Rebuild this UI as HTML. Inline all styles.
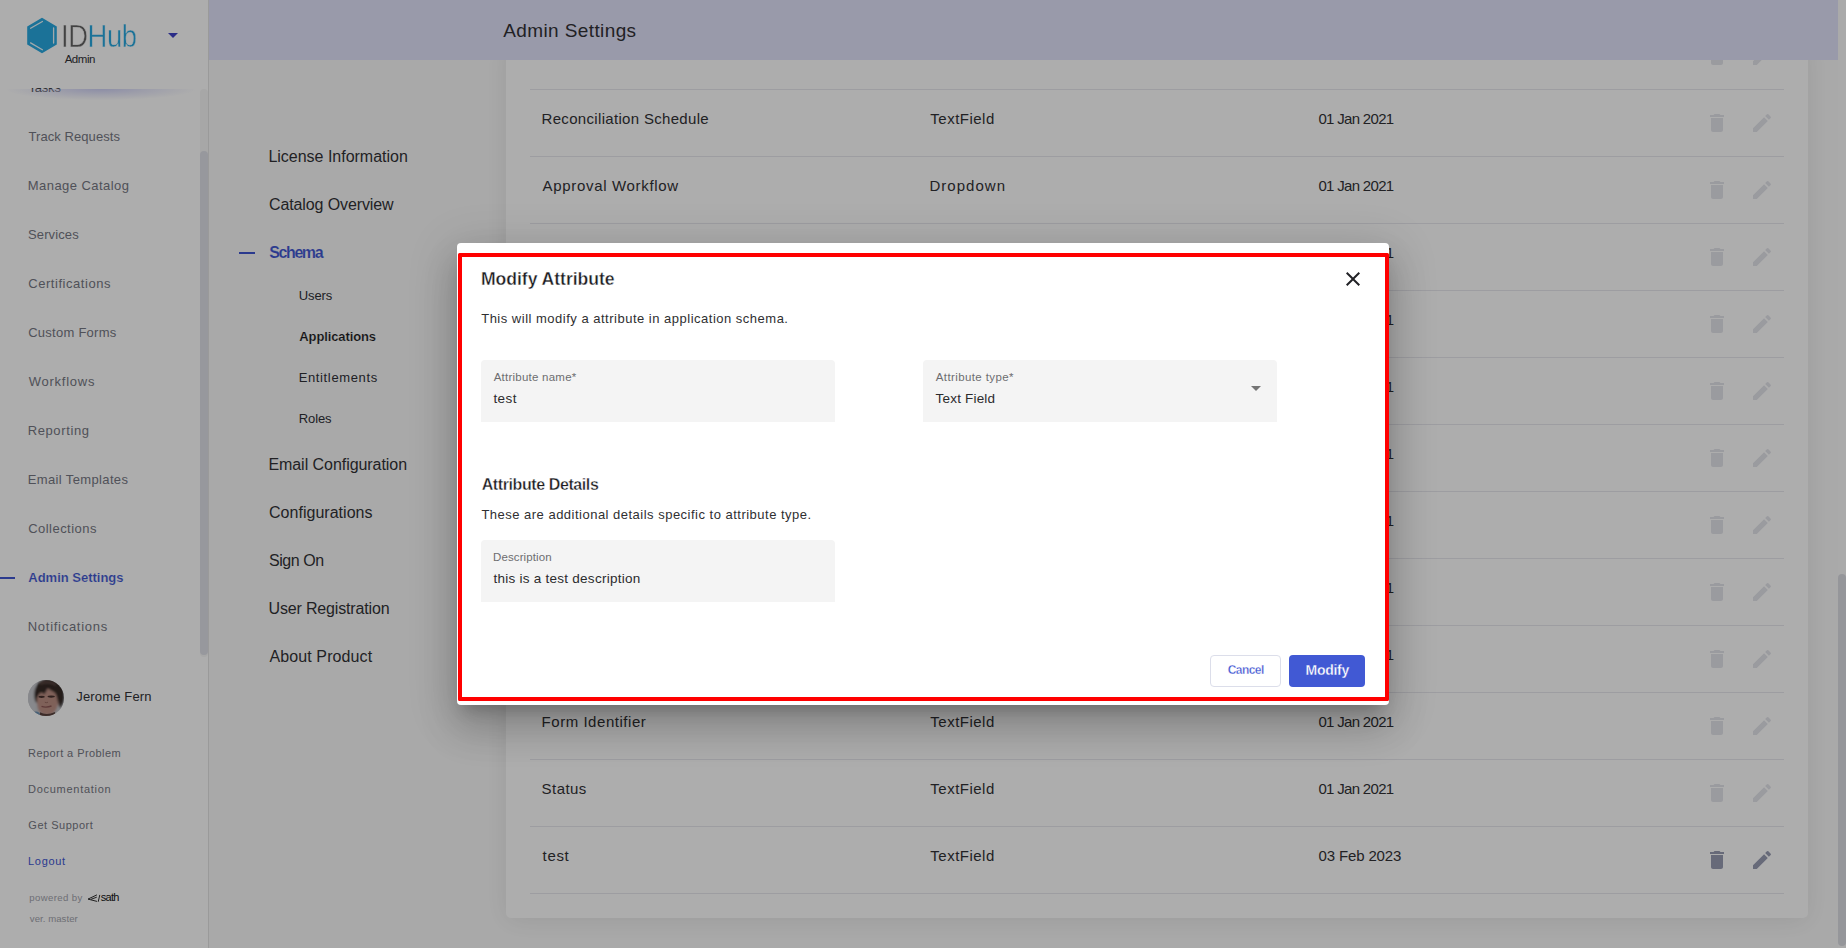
<!DOCTYPE html>
<html lang="en">
<head>
<meta charset="utf-8">
<title>IDHub - Admin Settings</title>
<style>
*{box-sizing:border-box;margin:0;padding:0}
html,body{width:1846px;height:948px;overflow:hidden}
body{font-family:"Liberation Sans",sans-serif;background:#fafafa;color:#26262e;position:relative}
.abs{position:absolute}
.t{position:absolute;white-space:pre;line-height:1}
#sidebar{position:absolute;left:0;top:0;width:209px;height:948px;background:#fff;border-right:1px solid #e4e4e4}
#sidescroll{position:absolute;left:0;top:0;width:208px;height:660px;overflow:hidden}
#sidehead{position:absolute;left:0;top:0;width:208px;height:88px;background:#fff;z-index:2}
#sideshadow{position:absolute;left:6px;top:89px;width:190px;height:11px;z-index:1;background:radial-gradient(ellipse 50% 100% at 50% 0,rgba(205,207,245,.95),rgba(205,207,245,.5) 45%,rgba(205,207,245,0) 100%)}
.logo{letter-spacing:-.5px;transform:scaleX(.857);transform-origin:0 0;-webkit-text-stroke:.5px #fff}
#strack{position:absolute;left:200px;top:89px;width:8px;height:568px;background:#f6f6f6;border-radius:4px;z-index:3}
#sthumb{position:absolute;left:200px;top:151px;width:8px;height:504px;background:#dfe0e8;border-radius:4px;z-index:3}
#header{position:absolute;left:209px;top:0;width:1629px;height:60px;background:#e2e3fb;z-index:4}
#card{position:absolute;left:506px;top:40px;width:1302px;height:878px;background:#fff;border-radius:5px;box-shadow:0 3px 26px rgba(0,0,0,.085)}
.line{position:absolute;left:530px;width:1254px;height:1px;background:#e8e8ed}
.ic{position:absolute;width:24px;height:24px}
#rtrack{position:absolute;left:1838px;top:0;width:8px;height:948px;background:#fbfbfb}
#rthumb{position:absolute;left:1838px;top:574px;width:8px;height:372px;background:#dcdde4;border-radius:4px}
#overlay{position:absolute;left:0;top:0;width:1846px;height:948px;background:rgba(0,0,0,.32);z-index:10}
#modal{position:absolute;left:457px;top:243px;width:932px;height:462px;background:#fff;border-radius:4px;z-index:20;
 box-shadow:0 11px 15px -7px rgba(0,0,0,.2),0 24px 38px 3px rgba(0,0,0,.14),0 9px 46px 8px rgba(0,0,0,.12)}
#hl{position:absolute;left:458px;top:253px;width:931px;height:448px;border:4px solid #ff0000;border-radius:1.5px;z-index:40}
.field{position:absolute;width:354px;height:62px;background:#f4f4f4;border-radius:4px 4px 0 0;z-index:25}
#cancel{position:absolute;left:1210px;top:655px;width:71px;height:32px;border:1px solid #dcdeea;border-radius:4px;background:#fff;z-index:25}
#modify{position:absolute;left:1289px;top:655px;width:76px;height:32px;border-radius:4px;background:#4159d4;z-index:25}
</style>
</head>
<body>
<div id="sidebar">
<div id="sidescroll">
<div class="t" style="left:28.49px;top:81px;font-size:13px;letter-spacing:-0.20px;color:#3c3d45;">Tasks</div>
<div class="t" style="left:28.49px;top:130px;font-size:13px;letter-spacing:0.07px;color:#767883;">Track Requests</div>
<div class="t" style="left:27.76px;top:179px;font-size:13px;letter-spacing:0.45px;color:#767883;">Manage Catalog</div>
<div class="t" style="left:28.03px;top:228px;font-size:13px;letter-spacing:0.11px;color:#767883;">Services</div>
<div class="t" style="left:28.21px;top:277px;font-size:13px;letter-spacing:0.55px;color:#767883;">Certifications</div>
<div class="t" style="left:28.21px;top:326px;font-size:13px;letter-spacing:0.26px;color:#767883;">Custom Forms</div>
<div class="t" style="left:28.69px;top:375px;font-size:13px;letter-spacing:0.76px;color:#767883;">Workflows</div>
<div class="t" style="left:27.67px;top:424px;font-size:13px;letter-spacing:0.62px;color:#767883;">Reporting</div>
<div class="t" style="left:27.67px;top:473px;font-size:13px;letter-spacing:0.37px;color:#767883;">Email Templates</div>
<div class="t" style="left:28.21px;top:522px;font-size:13px;letter-spacing:0.46px;color:#767883;">Collections</div>
<div class="abs" style="left:0;top:577px;width:15px;height:2px;background:#4056d2"></div>
<div class="t" style="left:28.32px;top:571px;font-size:13px;font-weight:700;letter-spacing:-0.01px;color:#4056d2;-webkit-text-stroke:.15px #fff;">Admin Settings</div>
<div class="t" style="left:27.75px;top:620px;font-size:13px;letter-spacing:0.72px;color:#767883;">Notifications</div>
</div>
<div id="sidehead">
<svg class="abs" style="left:26px;top:17px" width="32" height="37" viewBox="0 0 32 37">
<polygon points="16,0.8 30.8,9.4 30.8,27.6 16,36.2 1.2,27.6 1.2,9.4" fill="#29a9e0"/>
<path d="M4.6 11.3 L16.4 4.5 M27.6 10.9 V26.1 M4.6 25.9 L16.4 32.7" stroke="#fff" stroke-opacity=".92" stroke-width="1.300" fill="none" stroke-linecap="round"/>
</svg>
<div class="t logo" style="left:60.8px;top:20px;font-size:32px"><span style="color:#626262">ID</span><span style="color:#29a9e0">Hub</span></div>
<div class="t" style="left:64.65px;top:54px;font-size:11.5px;letter-spacing:-0.47px;color:#323236;">Admin</div>
<svg class="abs" style="left:167px;top:32px" width="12" height="7" viewBox="0 0 12 7"><path d="M1 1h10l-5 5z" fill="#3f41c8"/></svg>
</div>
<div id="sideshadow"></div>
<div id="strack"></div><div id="sthumb"></div>
<svg class="abs" style="left:28px;top:680px" width="36" height="36" viewBox="0 0 36 36">
<defs><clipPath id="av"><circle cx="18" cy="18" r="18"/></clipPath><filter id="bl" x="-30%" y="-30%" width="160%" height="160%"><feGaussianBlur stdDeviation="0.800"/></filter><filter id="bl2" x="-30%" y="-30%" width="160%" height="160%"><feGaussianBlur stdDeviation="0.450"/></filter></defs>
<g clip-path="url(#av)">
<rect x="-2" y="-2" width="40" height="40" fill="#c2c3c8"/>
<g filter="url(#bl)">
<rect x="-4" y="-4" width="12" height="44" fill="#c8c9ce"/>
<rect x="31" y="10" width="9" height="30" fill="#c6c6ca"/>
<path d="M7.500 22 C4 11 8 0.500 19 -1 C30 -2 37 5 36.500 16 C36.500 22 34.500 26 32 28.500 L30.500 16 C27 10 22 8 19 9 C15 7.500 11 10 9.500 14 L9.500 23 Z" fill="#352926"/>
<path d="M9.300 15 C11 9.500 16 8 19 8.500 C23 8 28 10 30.200 15 C31.200 22 29.500 29.500 25 33.500 C20.500 36.500 14 35.500 11 31 C9 27 8.700 20 9.300 15Z" fill="#bb8f84"/>
<path d="M7.500 16 C9 8 15 5.500 20 6.500 C19.500 9 18 12.500 16 14.500 C14.500 11.500 11 12 9.500 17.500 Z" fill="#352926"/>
<path d="M18 6.500 C24 5.500 29.500 9 31 16 L31.500 27 C29.500 23 29.500 17 27.500 13.500 C25 11 21 10 18 6.500Z" fill="#352926"/>
<path d="M12 4 C16 1.500 24 1.500 28 5" stroke="#5e4a44" stroke-width="2" fill="none"/>
</g><g filter="url(#bl2)"><ellipse cx="13.600" cy="16.800" rx="3.200" ry="1.150" fill="#46312d"/>
<ellipse cx="23.200" cy="16.600" rx="3.700" ry="1.150" fill="#46312d"/>
<path d="M16.800 22.200 Q18.200 23.200 20 22.200" stroke="#95695f" stroke-width="1" fill="none"/>
<path d="M13.500 26.300 Q18 28 23.500 26" stroke="#8b5654" stroke-width="1.400" fill="none"/>
<path d="M12 32.300 Q18.500 36 27 32 L28 38 H11Z" fill="#5a433d"/>
<path d="M4 32.500 Q8.500 30.500 11.500 33 L12.500 38 H4Z" fill="#6a8fb0"/>
</g></g></svg>
<div class="t" style="left:76.25px;top:690px;font-size:13px;letter-spacing:0.16px;color:#323236;">Jerome Fern</div>
<div class="t" style="left:28.04px;top:748px;font-size:11px;letter-spacing:0.43px;color:#767883;">Report a Problem</div>
<div class="t" style="left:28.04px;top:784px;font-size:11px;letter-spacing:0.72px;color:#767883;">Documentation</div>
<div class="t" style="left:28.34px;top:820px;font-size:11px;letter-spacing:0.51px;color:#767883;">Get Support</div>
<div class="t" style="left:28.04px;top:856px;font-size:11px;letter-spacing:0.69px;color:#4056d2;">Logout</div>
<div class="t" style="left:29.28px;top:893px;font-size:9.6px;letter-spacing:0.37px;color:#a3a4ad;">powered by</div>
<svg class="abs" style="left:86px;top:892px" width="16" height="12" viewBox="0 0 16 12"><path d="M10.600 3 L2 7.100 L10.600 9.300 M10.400 5.300 L5.300 7.200 M12.300 9.400 L13.700 3.300" stroke="#1a1a1a" stroke-width="0.900" fill="none" stroke-linecap="round" stroke-linejoin="round"/></svg>
<div class="t" style="left:100.70px;top:892px;font-size:11px;letter-spacing:-0.68px;color:#151515;">sath</div>
<div class="t" style="left:29.82px;top:914px;font-size:9.6px;letter-spacing:0.05px;color:#a3a4ad;">ver. master</div>
</div>
<div class="t" style="left:268.39px;top:149px;font-size:16px;letter-spacing:-0.01px;color:#323236;">License Information</div>
<div class="t" style="left:268.98px;top:197px;font-size:16px;letter-spacing:-0.11px;color:#323236;">Catalog Overview</div>
<div class="t" style="left:268.39px;top:457px;font-size:16px;letter-spacing:-0.05px;color:#323236;">Email Configuration</div>
<div class="t" style="left:268.98px;top:505px;font-size:16px;letter-spacing:0.03px;color:#323236;">Configurations</div>
<div class="t" style="left:268.92px;top:553px;font-size:16px;letter-spacing:-0.43px;color:#323236;">Sign On</div>
<div class="t" style="left:268.49px;top:601px;font-size:16px;letter-spacing:-0.16px;color:#323236;">User Registration</div>
<div class="t" style="left:269.52px;top:649px;font-size:16px;letter-spacing:0.10px;color:#323236;">About Product</div>
<div class="abs" style="left:239px;top:252px;width:16px;height:2px;background:#4056d2"></div>
<div class="t" style="left:269.34px;top:245px;font-size:16px;font-weight:700;letter-spacing:-1.43px;color:#4056d2;-webkit-text-stroke:.12px #fafafa;">Schema</div>
<div class="t" style="left:298.81px;top:289px;font-size:13px;letter-spacing:-0.11px;color:#2f3036;">Users</div>
<div class="t" style="left:299.32px;top:330px;font-size:13px;font-weight:700;letter-spacing:-0.12px;color:#1d1d22;-webkit-text-stroke:.15px #fafafa;">Applications</div>
<div class="t" style="left:298.67px;top:371px;font-size:13px;letter-spacing:0.64px;color:#2f3036;">Entitlements</div>
<div class="t" style="left:298.67px;top:412px;font-size:13px;letter-spacing:-0.07px;color:#2f3036;">Roles</div>
<div id="card"></div>
<div class="line" style="top:89px"></div>
<div class="t" style="left:542.14px;top:44px;font-size:15px;color:#323236;">Owner</div>
<div class="t" style="left:930.36px;top:44px;font-size:15px;letter-spacing:0.48px;color:#323236;">TextField</div>
<div class="t" style="left:1318.46px;top:44px;font-size:15px;letter-spacing:-0.69px;color:#323236;">01 Jan 2021</div>
<svg class="ic" style="left:1705px;top:44px;fill:#e4e5eb" viewBox="0 0 24 24"><path d="M6 19c0 1.1.9 2 2 2h8c1.1 0 2-.9 2-2V7H6v12zM19 4h-3.500l-1-1h-5l-1 1H5v2h14V4z"/></svg>
<svg class="ic" style="left:1750px;top:44px;fill:#e4e5eb" viewBox="0 0 24 24"><path d="M3 17.250V21h3.750L17.810 9.940l-3.750-3.750L3 17.250zM20.710 7.040c.39-.39.39-1.020 0-1.410l-2.340-2.340a.996.996 0 0 0-1.410 0l-1.830 1.830 3.750 3.750 1.830-1.830z"/></svg>
<div class="line" style="top:156px"></div>
<div class="t" style="left:541.55px;top:111px;font-size:15px;letter-spacing:0.32px;color:#323236;">Reconciliation Schedule</div>
<div class="t" style="left:930.36px;top:111px;font-size:15px;letter-spacing:0.48px;color:#323236;">TextField</div>
<div class="t" style="left:1318.46px;top:111px;font-size:15px;letter-spacing:-0.69px;color:#323236;">01 Jan 2021</div>
<svg class="ic" style="left:1705px;top:111px;fill:#e4e5eb" viewBox="0 0 24 24"><path d="M6 19c0 1.1.9 2 2 2h8c1.1 0 2-.9 2-2V7H6v12zM19 4h-3.500l-1-1h-5l-1 1H5v2h14V4z"/></svg>
<svg class="ic" style="left:1750px;top:111px;fill:#e4e5eb" viewBox="0 0 24 24"><path d="M3 17.250V21h3.750L17.810 9.940l-3.750-3.750L3 17.250zM20.710 7.040c.39-.39.39-1.020 0-1.410l-2.340-2.340a.996.996 0 0 0-1.410 0l-1.830 1.830 3.750 3.750 1.830-1.830z"/></svg>
<div class="line" style="top:223px"></div>
<div class="t" style="left:542.60px;top:178px;font-size:15px;letter-spacing:0.67px;color:#323236;">Approval Workflow</div>
<div class="t" style="left:929.45px;top:178px;font-size:15px;letter-spacing:1.03px;color:#323236;">Dropdown</div>
<div class="t" style="left:1318.46px;top:178px;font-size:15px;letter-spacing:-0.69px;color:#323236;">01 Jan 2021</div>
<svg class="ic" style="left:1705px;top:178px;fill:#e4e5eb" viewBox="0 0 24 24"><path d="M6 19c0 1.1.9 2 2 2h8c1.1 0 2-.9 2-2V7H6v12zM19 4h-3.500l-1-1h-5l-1 1H5v2h14V4z"/></svg>
<svg class="ic" style="left:1750px;top:178px;fill:#e4e5eb" viewBox="0 0 24 24"><path d="M3 17.250V21h3.750L17.810 9.940l-3.750-3.750L3 17.250zM20.710 7.040c.39-.39.39-1.020 0-1.410l-2.340-2.340a.996.996 0 0 0-1.410 0l-1.830 1.830 3.750 3.750 1.830-1.830z"/></svg>
<div class="line" style="top:290px"></div>
<div class="t" style="left:542.60px;top:245px;font-size:15px;color:#323236;">Application Type</div>
<div class="t" style="left:929.45px;top:245px;font-size:15px;letter-spacing:1.03px;color:#323236;">Dropdown</div>
<div class="t" style="left:1318.46px;top:245px;font-size:15px;letter-spacing:-0.69px;color:#323236;">01 Jan 2021</div>
<svg class="ic" style="left:1705px;top:245px;fill:#e4e5eb" viewBox="0 0 24 24"><path d="M6 19c0 1.1.9 2 2 2h8c1.1 0 2-.9 2-2V7H6v12zM19 4h-3.500l-1-1h-5l-1 1H5v2h14V4z"/></svg>
<svg class="ic" style="left:1750px;top:245px;fill:#e4e5eb" viewBox="0 0 24 24"><path d="M3 17.250V21h3.750L17.810 9.940l-3.750-3.750L3 17.250zM20.710 7.040c.39-.39.39-1.020 0-1.410l-2.340-2.340a.996.996 0 0 0-1.410 0l-1.830 1.830 3.750 3.750 1.830-1.830z"/></svg>
<div class="line" style="top:357px"></div>
<div class="t" style="left:542.10px;top:312px;font-size:15px;color:#323236;">Connector</div>
<div class="t" style="left:930.36px;top:312px;font-size:15px;letter-spacing:0.48px;color:#323236;">TextField</div>
<div class="t" style="left:1318.46px;top:312px;font-size:15px;letter-spacing:-0.69px;color:#323236;">01 Jan 2021</div>
<svg class="ic" style="left:1705px;top:312px;fill:#e4e5eb" viewBox="0 0 24 24"><path d="M6 19c0 1.1.9 2 2 2h8c1.1 0 2-.9 2-2V7H6v12zM19 4h-3.500l-1-1h-5l-1 1H5v2h14V4z"/></svg>
<svg class="ic" style="left:1750px;top:312px;fill:#e4e5eb" viewBox="0 0 24 24"><path d="M3 17.250V21h3.750L17.810 9.940l-3.750-3.750L3 17.250zM20.710 7.040c.39-.39.39-1.020 0-1.410l-2.340-2.340a.996.996 0 0 0-1.410 0l-1.830 1.830 3.750 3.750 1.830-1.830z"/></svg>
<div class="line" style="top:424px"></div>
<div class="t" style="left:541.55px;top:379px;font-size:15px;color:#323236;">Description</div>
<div class="t" style="left:930.36px;top:379px;font-size:15px;letter-spacing:0.48px;color:#323236;">TextField</div>
<div class="t" style="left:1318.46px;top:379px;font-size:15px;letter-spacing:-0.69px;color:#323236;">01 Jan 2021</div>
<svg class="ic" style="left:1705px;top:379px;fill:#e4e5eb" viewBox="0 0 24 24"><path d="M6 19c0 1.1.9 2 2 2h8c1.1 0 2-.9 2-2V7H6v12zM19 4h-3.500l-1-1h-5l-1 1H5v2h14V4z"/></svg>
<svg class="ic" style="left:1750px;top:379px;fill:#e4e5eb" viewBox="0 0 24 24"><path d="M3 17.250V21h3.750L17.810 9.940l-3.750-3.750L3 17.250zM20.710 7.040c.39-.39.39-1.020 0-1.410l-2.340-2.340a.996.996 0 0 0-1.410 0l-1.830 1.830 3.750 3.750 1.830-1.830z"/></svg>
<div class="line" style="top:491px"></div>
<div class="t" style="left:541.55px;top:446px;font-size:15px;color:#323236;">Display Name</div>
<div class="t" style="left:930.36px;top:446px;font-size:15px;letter-spacing:0.48px;color:#323236;">TextField</div>
<div class="t" style="left:1318.46px;top:446px;font-size:15px;letter-spacing:-0.69px;color:#323236;">01 Jan 2021</div>
<svg class="ic" style="left:1705px;top:446px;fill:#e4e5eb" viewBox="0 0 24 24"><path d="M6 19c0 1.1.9 2 2 2h8c1.1 0 2-.9 2-2V7H6v12zM19 4h-3.500l-1-1h-5l-1 1H5v2h14V4z"/></svg>
<svg class="ic" style="left:1750px;top:446px;fill:#e4e5eb" viewBox="0 0 24 24"><path d="M3 17.250V21h3.750L17.810 9.940l-3.750-3.750L3 17.250zM20.710 7.040c.39-.39.39-1.020 0-1.410l-2.340-2.340a.996.996 0 0 0-1.410 0l-1.830 1.830 3.750 3.750 1.830-1.830z"/></svg>
<div class="line" style="top:558px"></div>
<div class="t" style="left:542.10px;top:513px;font-size:15px;color:#323236;">Category</div>
<div class="t" style="left:929.45px;top:513px;font-size:15px;letter-spacing:1.03px;color:#323236;">Dropdown</div>
<div class="t" style="left:1318.46px;top:513px;font-size:15px;letter-spacing:-0.69px;color:#323236;">01 Jan 2021</div>
<svg class="ic" style="left:1705px;top:513px;fill:#e4e5eb" viewBox="0 0 24 24"><path d="M6 19c0 1.1.9 2 2 2h8c1.1 0 2-.9 2-2V7H6v12zM19 4h-3.500l-1-1h-5l-1 1H5v2h14V4z"/></svg>
<svg class="ic" style="left:1750px;top:513px;fill:#e4e5eb" viewBox="0 0 24 24"><path d="M3 17.250V21h3.750L17.810 9.940l-3.750-3.750L3 17.250zM20.710 7.040c.39-.39.39-1.020 0-1.410l-2.340-2.340a.996.996 0 0 0-1.410 0l-1.830 1.830 3.750 3.750 1.830-1.830z"/></svg>
<div class="line" style="top:625px"></div>
<div class="t" style="left:541.55px;top:580px;font-size:15px;color:#323236;">Risk Level</div>
<div class="t" style="left:929.45px;top:580px;font-size:15px;letter-spacing:1.03px;color:#323236;">Dropdown</div>
<div class="t" style="left:1318.46px;top:580px;font-size:15px;letter-spacing:-0.69px;color:#323236;">01 Jan 2021</div>
<svg class="ic" style="left:1705px;top:580px;fill:#e4e5eb" viewBox="0 0 24 24"><path d="M6 19c0 1.1.9 2 2 2h8c1.1 0 2-.9 2-2V7H6v12zM19 4h-3.500l-1-1h-5l-1 1H5v2h14V4z"/></svg>
<svg class="ic" style="left:1750px;top:580px;fill:#e4e5eb" viewBox="0 0 24 24"><path d="M3 17.250V21h3.750L17.810 9.940l-3.750-3.750L3 17.250zM20.710 7.040c.39-.39.39-1.020 0-1.410l-2.340-2.340a.996.996 0 0 0-1.410 0l-1.830 1.830 3.750 3.750 1.830-1.830z"/></svg>
<div class="line" style="top:692px"></div>
<div class="t" style="left:542.10px;top:647px;font-size:15px;color:#323236;">Certification Policy</div>
<div class="t" style="left:930.36px;top:647px;font-size:15px;letter-spacing:0.48px;color:#323236;">TextField</div>
<div class="t" style="left:1318.46px;top:647px;font-size:15px;letter-spacing:-0.69px;color:#323236;">01 Jan 2021</div>
<svg class="ic" style="left:1705px;top:647px;fill:#e4e5eb" viewBox="0 0 24 24"><path d="M6 19c0 1.1.9 2 2 2h8c1.1 0 2-.9 2-2V7H6v12zM19 4h-3.500l-1-1h-5l-1 1H5v2h14V4z"/></svg>
<svg class="ic" style="left:1750px;top:647px;fill:#e4e5eb" viewBox="0 0 24 24"><path d="M3 17.250V21h3.750L17.810 9.940l-3.750-3.750L3 17.250zM20.710 7.040c.39-.39.39-1.020 0-1.410l-2.340-2.340a.996.996 0 0 0-1.410 0l-1.830 1.830 3.750 3.750 1.830-1.830z"/></svg>
<div class="line" style="top:759px"></div>
<div class="t" style="left:541.55px;top:714px;font-size:15px;letter-spacing:0.54px;color:#323236;">Form Identifier</div>
<div class="t" style="left:930.36px;top:714px;font-size:15px;letter-spacing:0.48px;color:#323236;">TextField</div>
<div class="t" style="left:1318.46px;top:714px;font-size:15px;letter-spacing:-0.69px;color:#323236;">01 Jan 2021</div>
<svg class="ic" style="left:1705px;top:714px;fill:#e4e5eb" viewBox="0 0 24 24"><path d="M6 19c0 1.1.9 2 2 2h8c1.1 0 2-.9 2-2V7H6v12zM19 4h-3.500l-1-1h-5l-1 1H5v2h14V4z"/></svg>
<svg class="ic" style="left:1750px;top:714px;fill:#e4e5eb" viewBox="0 0 24 24"><path d="M3 17.250V21h3.750L17.810 9.940l-3.750-3.750L3 17.250zM20.710 7.040c.39-.39.39-1.020 0-1.410l-2.340-2.340a.996.996 0 0 0-1.410 0l-1.830 1.830 3.750 3.750 1.830-1.830z"/></svg>
<div class="line" style="top:826px"></div>
<div class="t" style="left:541.59px;top:781px;font-size:15px;letter-spacing:0.44px;color:#323236;">Status</div>
<div class="t" style="left:930.36px;top:781px;font-size:15px;letter-spacing:0.48px;color:#323236;">TextField</div>
<div class="t" style="left:1318.46px;top:781px;font-size:15px;letter-spacing:-0.69px;color:#323236;">01 Jan 2021</div>
<svg class="ic" style="left:1705px;top:781px;fill:#e4e5eb" viewBox="0 0 24 24"><path d="M6 19c0 1.1.9 2 2 2h8c1.1 0 2-.9 2-2V7H6v12zM19 4h-3.500l-1-1h-5l-1 1H5v2h14V4z"/></svg>
<svg class="ic" style="left:1750px;top:781px;fill:#e4e5eb" viewBox="0 0 24 24"><path d="M3 17.250V21h3.750L17.810 9.940l-3.750-3.750L3 17.250zM20.710 7.040c.39-.39.39-1.020 0-1.410l-2.340-2.340a.996.996 0 0 0-1.410 0l-1.830 1.830 3.750 3.750 1.830-1.830z"/></svg>
<div class="line" style="top:893px"></div>
<div class="t" style="left:542.55px;top:848px;font-size:15px;letter-spacing:0.67px;color:#323236;">test</div>
<div class="t" style="left:930.36px;top:848px;font-size:15px;letter-spacing:0.48px;color:#323236;">TextField</div>
<div class="t" style="left:1318.46px;top:848px;font-size:15px;letter-spacing:-0.13px;color:#323236;">03 Feb 2023</div>
<svg class="ic" style="left:1705px;top:848px;fill:#999db3" viewBox="0 0 24 24"><path d="M6 19c0 1.1.9 2 2 2h8c1.1 0 2-.9 2-2V7H6v12zM19 4h-3.500l-1-1h-5l-1 1H5v2h14V4z"/></svg>
<svg class="ic" style="left:1750px;top:848px;fill:#999db3" viewBox="0 0 24 24"><path d="M3 17.250V21h3.750L17.810 9.940l-3.750-3.750L3 17.250zM20.710 7.040c.39-.39.39-1.020 0-1.410l-2.340-2.340a.996.996 0 0 0-1.410 0l-1.830 1.830 3.750 3.750 1.830-1.830z"/></svg>
<div id="header"></div>
<div class="t" style="left:503.14px;top:21px;font-size:19px;letter-spacing:0.40px;color:#323236;z-index:5;">Admin Settings</div>
<div id="rtrack"></div><div id="rthumb"></div>
<div id="overlay"></div>
<div id="modal"></div><div id="hl"></div>
<div class="t" style="left:480.90px;top:271px;font-size:17.6px;font-weight:700;letter-spacing:-0.03px;color:#1c1c1f;z-index:30;-webkit-text-stroke:.35px #fff;">Modify Attribute</div>
<svg class="abs" style="left:1341px;top:267px;z-index:30" width="24" height="24" viewBox="0 0 24 24"><path d="M19 6.410L17.590 5 12 10.590 6.410 5 5 6.410 10.590 12 5 17.590 6.410 19 12 13.410 17.590 19 19 17.590 13.410 12z" fill="#222226"/></svg>
<div class="t" style="left:481.19px;top:312px;font-size:13px;letter-spacing:0.50px;color:#2f2f31;z-index:30;">This will modify a attribute in application schema.</div>
<div class="field" style="left:481px;top:360px"></div>
<div class="field" style="left:923px;top:360px"></div>
<div class="t" style="left:493.65px;top:372px;font-size:11.5px;letter-spacing:0.24px;color:#6d6d70;z-index:30;">Attribute name*</div>
<div class="t" style="left:493.42px;top:392px;font-size:13.5px;letter-spacing:0.42px;color:#2b2b2d;z-index:30;">test</div>
<div class="t" style="left:935.75px;top:372px;font-size:11.5px;letter-spacing:0.39px;color:#6d6d70;z-index:30;">Attribute type*</div>
<div class="t" style="left:935.59px;top:392px;font-size:13.5px;letter-spacing:0.19px;color:#2b2b2d;z-index:30;">Text Field</div>
<svg class="abs" style="left:1244px;top:376px;z-index:30" width="24" height="24" viewBox="0 0 24 24"><path d="M7 10l5 5 5-5z" fill="#757575"/></svg>
<div class="t" style="left:481.65px;top:477px;font-size:16px;font-weight:700;letter-spacing:-0.40px;color:#1c1c1f;z-index:30;-webkit-text-stroke:.35px #fff;">Attribute Details</div>
<div class="t" style="left:481.39px;top:508px;font-size:13px;letter-spacing:0.49px;color:#2f2f31;z-index:30;">These are additional details specific to attribute type.</div>
<div class="field" style="left:481px;top:540px"></div>
<div class="t" style="left:493.02px;top:552px;font-size:11.5px;letter-spacing:0.11px;color:#6d6d70;z-index:30;">Description</div>
<div class="t" style="left:493.42px;top:572px;font-size:13.5px;letter-spacing:0.26px;color:#2b2b2d;z-index:30;">this is a test description</div>
<div id="cancel"></div><div id="modify"></div>
<div class="t" style="left:1227.72px;top:664px;font-size:12px;font-weight:700;letter-spacing:-0.56px;color:#3f55d2;z-index:30;-webkit-text-stroke:.3px #fff;">Cancel</div>
<div class="t" style="left:1305.51px;top:663px;font-size:14px;font-weight:700;letter-spacing:-0.26px;color:#ffffff;z-index:30;-webkit-text-stroke:.3px #4159d4;">Modify</div>
</body>
</html>
